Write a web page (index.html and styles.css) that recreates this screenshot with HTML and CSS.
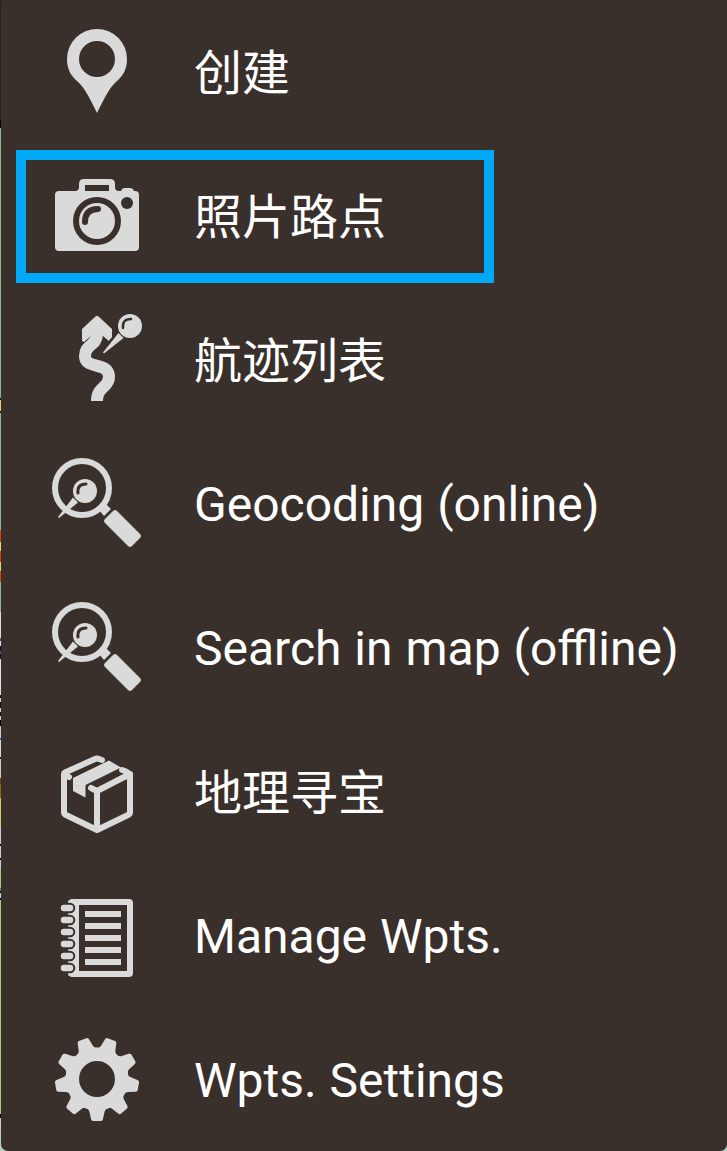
FILE: index.html
```
<!DOCTYPE html>
<html lang="zh-CN">
<head>
<meta charset="utf-8">
<title>Waypoints</title>
<link rel="stylesheet" href="styles.css">
</head>
<body>
<ul class="menu">
  <li class="item">
    <svg class="icon" viewBox="49 24 96 96"><path fill-rule="evenodd" d="M97 29a30 30 0 0 1 30 30c0 10-4 17-10 22-8 7-12 16-20 32-8-16-12-25-20-32-6-5-10-12-10-22a30 30 0 0 1 30-30zM97 41a18 18 0 1 0 0 36a18 18 0 0 0 0-36z"/></svg>
    <span class="label cjk">创建</span>
  </li>
  <li class="item selected">
    <svg class="icon" viewBox="49 168 96 96">
      <path d="M59 191h16q4 0 4-4v-3q0-5 5-5h26q5 0 5 5v3q0 4 4 4h2q1-3 4-3h5q3 0 4 3h1q4 0 4 4v52q0 4-4 4H59q-4 0-4-4v-52q0-4 4-4z"/>
      <path class="dark" d="M85 185h24v6H85z"/>
      <circle class="dark" cx="127" cy="203" r="6"/>
      <circle class="dark" cx="97" cy="221" r="24"/>
      <circle cx="97" cy="221" r="18"/>
      <path class="dark-line" stroke-width="6" d="M85 222q0-13 13-13"/>
    </svg>
    <span class="label cjk">照片路点</span>
  </li>
  <li class="item">
    <svg class="icon" viewBox="49 312 96 96">
      <path d="M95.500 316.500q1.500-1.500 3 0L112 329v12l-2 1-7-6H91l-7 6-2-1v-12z"/>
      <path class="line" stroke-width="12" d="M97 328v6C97 346 85 344 85 356C85 370 109 361 109 377C109 388 97 386 97 401"/>
      <path class="dark-line" stroke-width="2.500" d="M108.500 343L118 332"/>
      <path d="M103 352.500l15.500-19.500 5 5-19.500 15.500z"/>
      <circle cx="130" cy="326" r="12"/>
      <path class="dark-line" stroke-width="2.500" d="M123 328q-1-9 8-9"/>
    </svg>
    <span class="label cjk">航迹列表</span>
  </li>
  <li class="item">
    <svg class="icon" viewBox="49 456 96 96">
      <g id="magnifier">
        <circle class="line" stroke-width="6" cx="82" cy="488" r="27"/>
        <circle cx="85" cy="491" r="12"/>
        <path class="dark-line" stroke-width="3" d="M78 493q-1-9 8-9"/>
        <path d="M58 517l15-19.500 5 5-19 15.500zM99 510l6-7 6 6-7 7z"/>
        <path d="M113 511q2-2 4 0l23 23q2 2 0 4l-8 8q-2 2-4 0l-23-23q-2-2 0-4z"/>
      </g>
    </svg>
    <span class="label">Geocoding (online)</span>
  </li>
  <li class="item">
    <svg class="icon" viewBox="49 456 96 96"><use href="#magnifier"/></svg>
    <span class="label">Search in map (offline)</span>
  </li>
  <li class="item">
    <svg class="icon" viewBox="49 744 96 96">
      <path class="line box" d="M69 777l-5-3v39q0 1 1 1.500l32 15.500 32-15.500q1-.5 1-1.500v-39l-33 17v38M97 791l-6-3M64 774q0-1 1-1.500L95 759q2-1 4 0l3 1M122 770l3 1 5 3"/>
      <path d="M73 778l36-17.500 12 7L85.500 785v12.500L73 791z"/>
    </svg>
    <span class="label cjk">地理寻宝</span>
  </li>
  <li class="item">
    <svg class="icon" viewBox="49 888 96 96">
      <path fill-rule="evenodd" d="M71 899h58q4 0 4 4v70q0 4-4 4H71l-3-2V901zM79 905v66h48v-66z"/>
      <path d="M85 911h36v6H85zM85 923h36v6H85zM85 935h36v6H85zM85 947h36v6H85zM85 959h36v6H85z"/>
      <path class="dark-line" stroke-width="10.500" d="M64 908h6M64 920h6M64 932h6M64 944h6M64 956h6M64 968h6"/>
      <path class="line coil" stroke-width="6.500" d="M64 908h6M64 920h6M64 932h6M64 944h6M64 956h6M64 968h6"/>
    </svg>
    <span class="label">Manage Wpts.</span>
  </li>
  <li class="item">
    <svg class="icon" viewBox="-48 -47 96 96">
      <circle class="line" stroke-width="13.500" r="24.700"/>
      <path id="tooth" d="M-11 29q3 1 3.500 4l1.500 7q.5 2 2 2h8q1.500 0 2-2l1.500-7q.5-3 3.500-4z"/>
      <use href="#tooth" transform="rotate(40)"/>
      <use href="#tooth" transform="rotate(80)"/>
      <use href="#tooth" transform="rotate(120)"/>
      <use href="#tooth" transform="rotate(160)"/>
      <use href="#tooth" transform="rotate(200)"/>
      <use href="#tooth" transform="rotate(240)"/>
      <use href="#tooth" transform="rotate(280)"/>
      <use href="#tooth" transform="rotate(320)"/>
    </svg>
    <span class="label">Wpts. Settings</span>
  </li>
</ul>
</body>
</html>
```
FILE: styles.css
```
*, *::after { box-sizing: border-box; }

/* The map stays visible as a sliver along the menu's left edge. */
body {
  margin: 0;
  height: 1151px;
  padding-left: 1px;
  overflow: hidden;
  background: linear-gradient(#282321 0 120px, #000 120px 128px, #8ab58d 128px 398px,
    #111 398px 400px, #e8cf68 400px 411px, #111 411px 413px, #8ab58d 413px 530px,
    #e04000 530px 542px, #dada70 542px 551px, #e04000 551px 562px, #dada70 562px 571px,
    #e04000 571px 582px, #8ab58d 582px 612px, #d8dce0 612px 638px, #555 638px 641px,
    #d8dce0 641px 646px, #101040 646px 651px, #555 651px 654px, #101040 654px 659px,
    #dde 659px 695px, #111 695px 698px, #ccc 698px 702px, #111 702px 708px,
    #ccc 708px 712px, #111 712px 716px, #ccc 716px 720px, #000 720px 726px,
    #ccc 726px 738px, #2858e0 738px 740px, #ddd8c8 740px 757px, #222 757px 759px,
    #ccc 759px 778px, #704000 778px 784px, #8a7000 784px 798px, #d8c868 798px 828px,
    #ccd 828px 844px, #111 844px 846px, #ccd 846px 858px, #111 858px 860px,
    #ccd 860px 867px, #a5d080 867px 888px, #389070 888px 891px, #111 891px 893px,
    #ccd 893px 898px, #111 898px 900px, #a5d080 900px 1114px, #111 1114px 1118px,
    #ccd 1118px 1128px, #b8cec4 1128px);
}

.menu {
  display: flex;
  flex-direction: column;
  height: 1151px;
  margin: 0;
  padding: 0;
  list-style: none;
  background: #39302c;
  border-radius: 2px 0 7px 7px;
}

.item {
  position: relative;
  display: flex;
  flex: 0 0 144px;
  align-items: center;
  gap: 49px;
  padding-left: 48px;
}

.icon {
  flex: none;
  width: 96px;
  height: 96px;
  fill: #dadada;
}

.line { fill: none; stroke: #dadada; }
.box { stroke-width: 6; stroke-linejoin: round; stroke-linecap: round; }
.coil { stroke-linecap: round; }
.dark { fill: #39302c; }
.dark-line { fill: none; stroke: #39302c; stroke-linecap: round; }

.label {
  padding-top: 2px;
  color: #fff;
  font: 400 48px/56px Roboto, "Noto Sans CJK SC", sans-serif;
  word-spacing: 1px;
  white-space: nowrap;
}

.cjk { padding-top: 4px; }

.selected::after {
  content: "";
  position: absolute;
  left: 15px;
  top: 6px;
  width: 478px;
  height: 133px;
  border: 10px solid #00a8f5;
}
```
